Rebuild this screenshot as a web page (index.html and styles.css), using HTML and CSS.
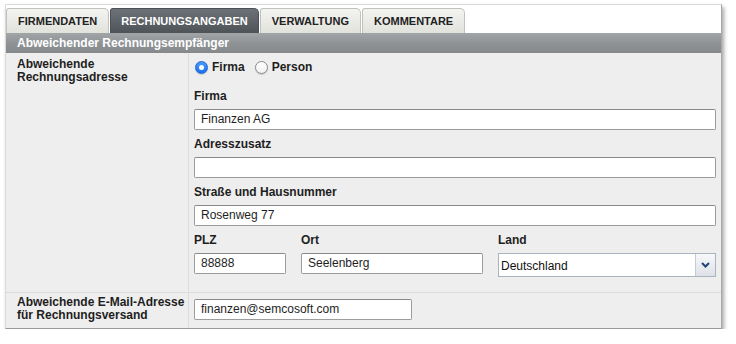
FILE: index.html
```html
<!DOCTYPE html>
<html lang="de">
<head>
<meta charset="utf-8">
<title>Rechnungsangaben</title>
<link rel="stylesheet" href="styles.css">
</head>
<body>
<div class="panel">
  <div class="tabs">
    <div class="tab">FIRMENDATEN</div>
    <div class="tab tab-active">RECHNUNGSANGABEN</div>
    <div class="tab">VERWALTUNG</div>
    <div class="tab">KOMMENTARE</div>
  </div>
  <div class="section-head">Abweichender Rechnungsempfänger</div>
  <div class="row row-address">
    <div class="row-label">Abweichende<br>Rechnungsadresse</div>
    <div class="row-body">
      <div class="radios">
        <label class="radio"><span class="radio-dot radio-on"></span>Firma</label>
        <label class="radio"><span class="radio-dot"></span>Person</label>
      </div>
      <div class="field field-first">
        <div class="field-label">Firma</div>
        <div class="text-input">Finanzen AG</div>
      </div>
      <div class="field">
        <div class="field-label">Adresszusatz</div>
        <div class="text-input"></div>
      </div>
      <div class="field">
        <div class="field-label">Straße und Hausnummer</div>
        <div class="text-input">Rosenweg 77</div>
      </div>
      <div class="field field-grid">
        <div class="field-cell">
          <div class="field-label">PLZ</div>
          <div class="text-input">88888</div>
        </div>
        <div class="field-cell">
          <div class="field-label">Ort</div>
          <div class="text-input">Seelenberg</div>
        </div>
        <div class="field-cell">
          <div class="field-label">Land</div>
          <div class="select">
            <span class="select-value">Deutschland</span>
            <span class="select-button">
              <svg width="9" height="6" viewBox="0 0 9 6"><path d="M1 1 L4.5 4.5 L8 1" fill="none" stroke="#23427a" stroke-width="2"/></svg>
            </span>
          </div>
        </div>
      </div>
    </div>
  </div>
  <div class="row row-email">
    <div class="row-label row-label-email">Abweichende E-Mail-Adresse<br>für Rechnungsversand</div>
    <div class="row-body row-body-email">
      <div class="text-input email-input">finanzen@semcosoft.com</div>
    </div>
  </div>
</div>
</body>
</html>
```

FILE: styles.css
```css
html, body {
  margin: 0;
  padding: 0;
  background: #ffffff;
}

body {
  font-family: "Liberation Sans", Arial, Helvetica, sans-serif;
  color: #1e1e1e;
}

.panel {
  margin: 4px 0 0 5px;
  width: 715px;
  border: 1px solid #dadada;
  border-right-color: #a8a8a8;
  border-bottom-color: #9a9a9a;
  background: #ffffff;
  box-shadow: 2px 3px 4px rgba(0, 0, 0, 0.35);
}

.tabs {
  display: flex;
  gap: 1px;
  padding-top: 3px;
  background: #ffffff;
}

.tab {
  height: 24px;
  line-height: 25px;
  padding: 0 11px 0 11px;
  font-size: 11px;
  font-weight: bold;
  color: #222222;
  background: linear-gradient(#f3f3f0, #e2e2dd);
  border: 1px solid #c2c2bc;
  border-bottom: none;
  border-radius: 3px 5px 0 0;
}

.tab-active {
  padding: 0 10px;
  color: #ffffff;
  background: linear-gradient(#6c7277, #4d5357);
  border-color: #4a5054;
}

.section-head {
  height: 20px;
  line-height: 20px;
  padding-left: 11px;
  font-size: 12px;
  font-weight: bold;
  color: #ffffff;
  background: linear-gradient(#a1a5a8, #8f9396 50%, #86898c);
}

.row {
  display: flex;
  background: #eeeeee;
}

.row-address {
  border-bottom: 1px solid #dcdcdc;
}

.row-label {
  width: 171px;
  flex: none;
  padding: 5px 0 0 11px;
  font-size: 12px;
  line-height: 13px;
  font-weight: bold;
  color: #1e1e1e;
  border-right: 1px solid #dcdcdc;
}

.row-label-email {
  padding-top: 3px;
}

.row-body {
  flex: 1;
  padding: 6px 5px 15px 5px;
}

.row-body-email {
  padding: 6px 5px 8px 5px;
}

.radios {
  display: flex;
  gap: 10px;
  height: 16px;
  align-items: center;
  padding-left: 1px;
}

.radio {
  display: flex;
  align-items: center;
  gap: 4px;
  font-size: 12px;
  font-weight: bold;
}

.radio-dot {
  width: 11px;
  height: 11px;
  border-radius: 50%;
  border: 1px solid #8a8a8a;
  background: linear-gradient(#ffffff, #f1f1f1);
  box-shadow: 0 1px 1px rgba(0, 0, 0, 0.15);
  position: relative;
}

.radio-on {
  border-color: #1f63d6;
  background: linear-gradient(#4b9bff, #1a6ff0);
}

.radio-on::after {
  content: "";
  position: absolute;
  left: 3px;
  top: 3px;
  width: 5px;
  height: 5px;
  border-radius: 50%;
  background: #ffffff;
}

.field {
  margin-top: 7px;
}

.field-first {
  margin-top: 14px;
}

.field-label {
  height: 14px;
  line-height: 14px;
  margin-bottom: 6px;
  font-size: 12px;
  font-weight: bold;
  color: #1e1e1e;
}

.text-input {
  box-sizing: border-box;
  height: 21px;
  line-height: 19px;
  padding-left: 6px;
  font-size: 12px;
  color: #1e1e1e;
  background: #ffffff;
  border: 1px solid #9c9c9c;
  border-top-color: #8a8a8a;
  border-radius: 2px;
}

.field-grid {
  display: grid;
  grid-template-columns: 92px 182px 1fr;
  column-gap: 15px;
  align-items: start;
}

.select {
  box-sizing: border-box;
  height: 24px;
  display: flex;
  background: #ffffff;
  border: 1px solid #aab3c0;
}

.select-value {
  flex: 1;
  padding-left: 2px;
  line-height: 24px;
  font-size: 12px;
  color: #111111;
}

.select-button {
  width: 19px;
  display: flex;
  align-items: center;
  justify-content: center;
  border-left: 1px solid #c4cbd5;
  background: linear-gradient(#f7f8fa, #dde1e6);
}

.email-input {
  width: 218px;
}
```
